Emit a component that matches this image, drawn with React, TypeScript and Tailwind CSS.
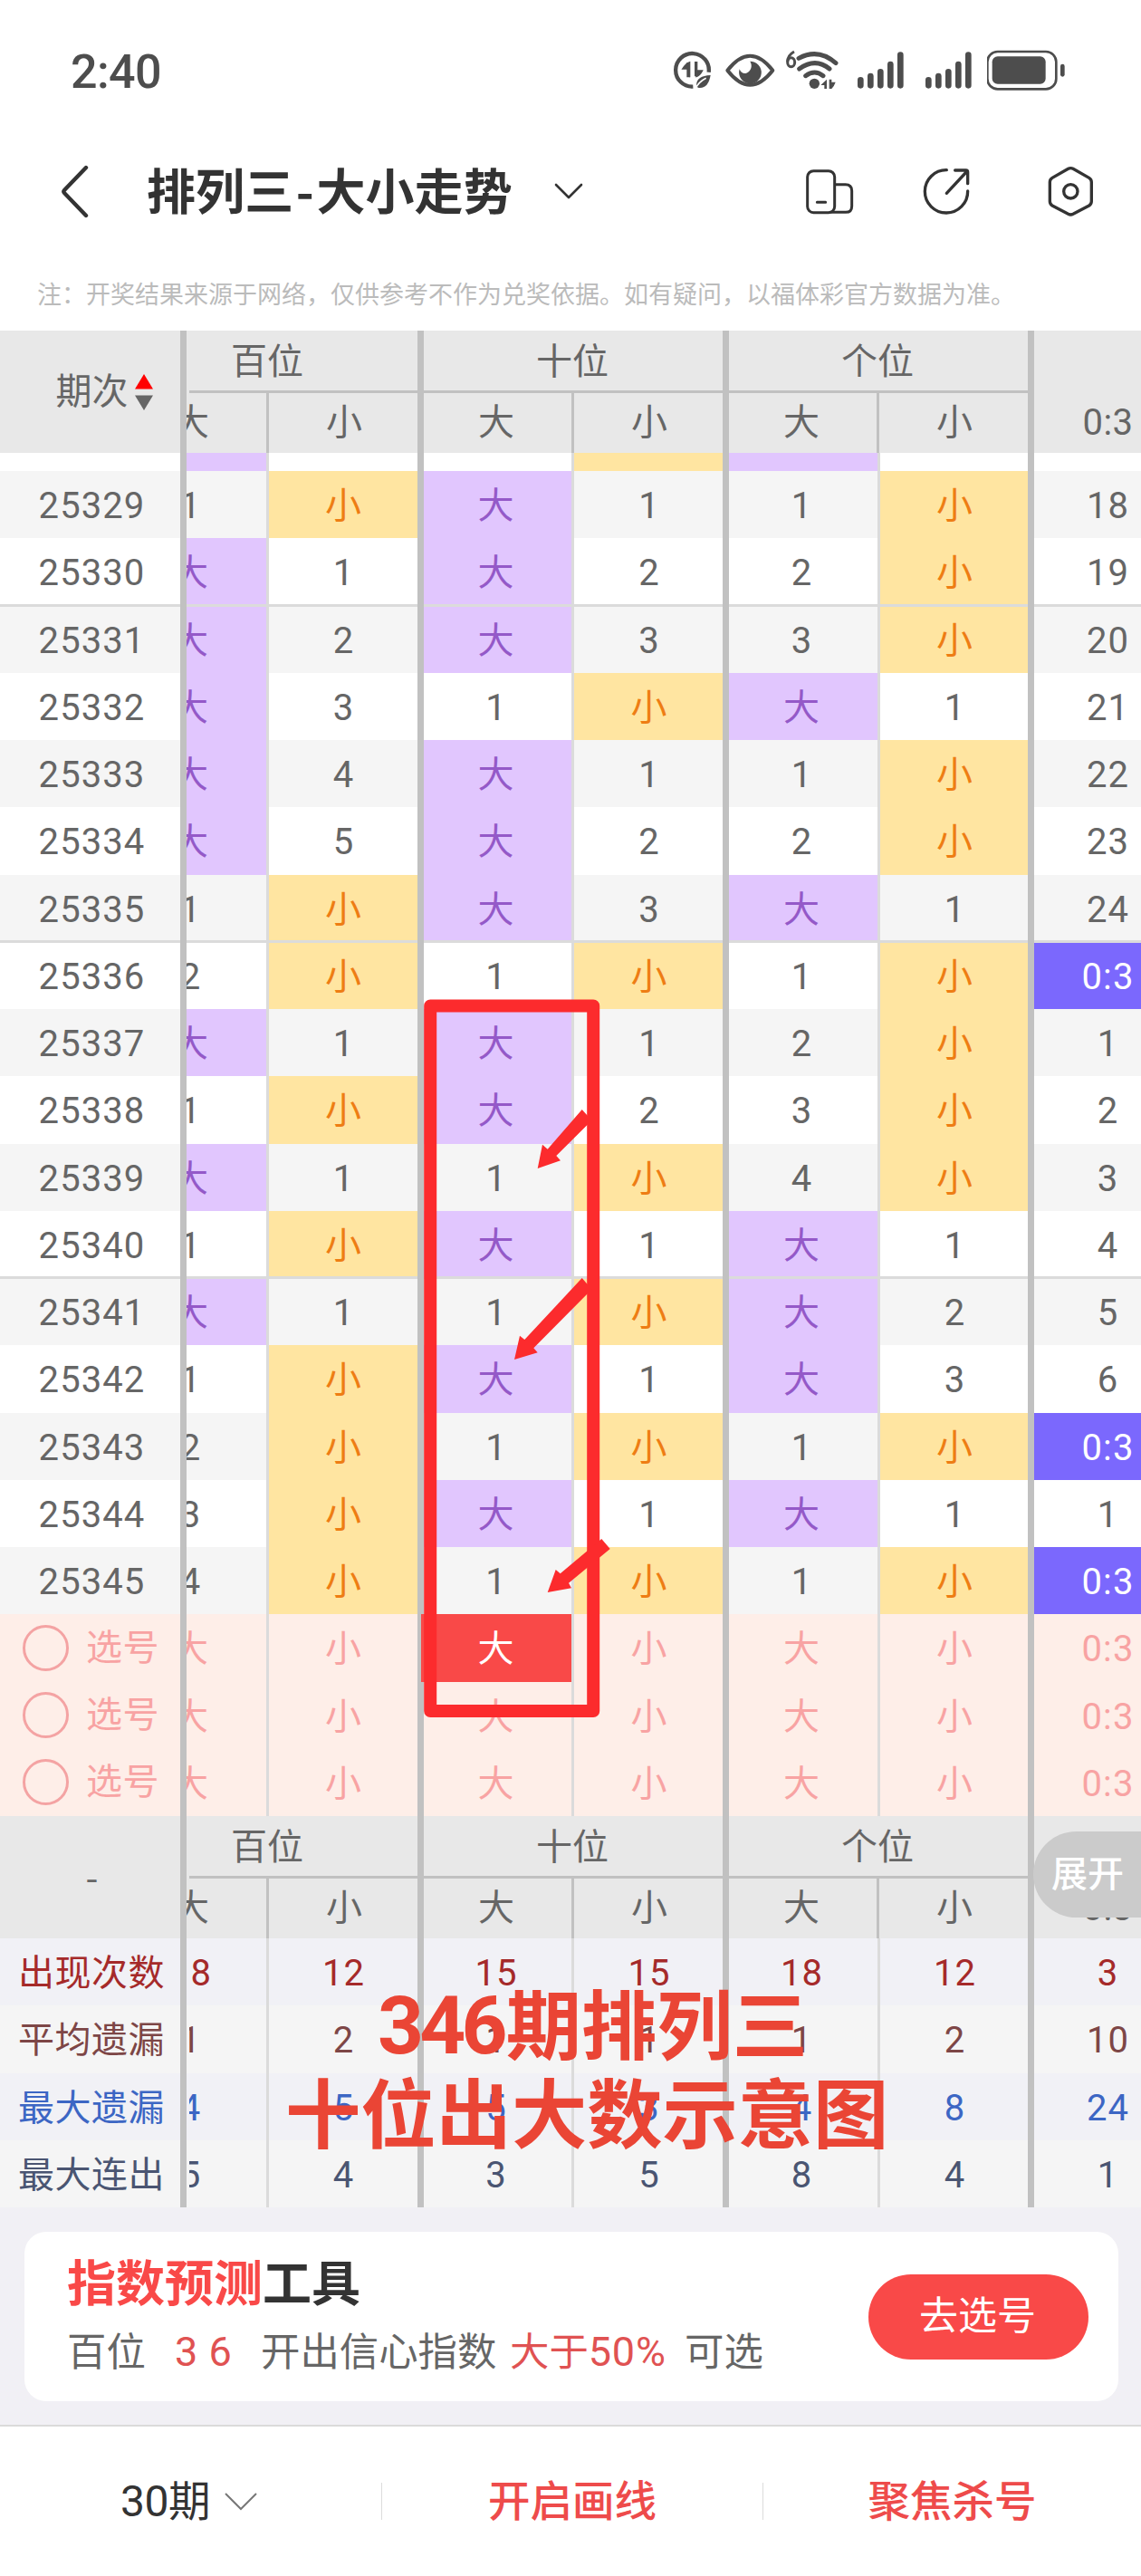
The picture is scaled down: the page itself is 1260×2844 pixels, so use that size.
import React from "react";
import clsx from "clsx";

// ─── DATA ───
// 百大, 百小, 十大, 十小, 个大, 个小, 0:3
const draws: [string, string[]][] = [
  ["25329", ["1", "小", "大", "1", "1", "小", "18"]],
  ["25330", ["大", "1", "大", "2", "2", "小", "19"]],
  ["25331", ["大", "2", "大", "3", "3", "小", "20"]],
  ["25332", ["大", "3", "1", "小", "大", "1", "21"]],
  ["25333", ["大", "4", "大", "1", "1", "小", "22"]],
  ["25334", ["大", "5", "大", "2", "2", "小", "23"]],
  ["25335", ["1", "小", "大", "3", "大", "1", "24"]],
  ["25336", ["2", "小", "1", "小", "1", "小", "0:3"]],
  ["25337", ["大", "1", "大", "1", "2", "小", "1"]],
  ["25338", ["1", "小", "大", "2", "3", "小", "2"]],
  ["25339", ["大", "1", "1", "小", "4", "小", "3"]],
  ["25340", ["1", "小", "大", "1", "大", "1", "4"]],
  ["25341", ["大", "1", "1", "小", "大", "2", "5"]],
  ["25342", ["1", "小", "大", "1", "大", "3", "6"]],
  ["25343", ["2", "小", "1", "小", "1", "小", "0:3"]],
  ["25344", ["3", "小", "大", "1", "大", "1", "1"]],
  ["25345", ["4", "小", "1", "小", "1", "小", "0:3"]],
];

const stats = [
  { label: "出现次数", color: "text-[#a52a2a]", bg: "bg-[#f1f1f6]", values: ["18", "12", "15", "15", "18", "12", "3"] },
  { label: "平均遗漏", color: "text-[#7d4646]", bg: "bg-[#f5f5f5]", values: ["1", "2", "1", "1", "1", "2", "10"] },
  { label: "最大遗漏", color: "text-[#3c66c4]", bg: "bg-[#f1f1f6]", values: ["4", "5", "5", "3", "4", "8", "24"] },
  { label: "最大连出", color: "text-[#4a5572]", bg: "bg-[#f5f5f5]", values: ["5", "4", "3", "5", "8", "4", "1"] },
];

const picks = ["大", "小", "大", "小", "大", "小", "0:3"];

// column boxes: width plus the divider on the right
const cols = [
  "w-[91px] border-r-[3px] border-[#dbdbdb]",
  "w-[171px] border-r-[7px] border-[#c1c1c1] pl-px",
  "w-[166px] border-r-[3px] border-[#dbdbdb] pr-[3px]",
  "w-[171px] border-r-[7px] border-[#c1c1c1] pl-[2px]",
  "w-[167px] border-r-[3px] border-[#dbdbdb] pr-[3px]",
  "w-[170px] border-r-[7px] border-[#c1c1c1] pl-[2px]",
  "w-[118px]",
];

const tone = (v: string) => {
  if (v === "大") return "bg-[#e1c6fe] text-[#9459c8]";
  if (v === "小") return "bg-[#ffe5a1] text-[#ee7d14]";
  if (v === "0:3") return "bg-[#7b68fd] text-white";
  return "";
};

type CellProps = {
  col: number;
  value: string;
  className?: string;
  line?: boolean;
  inset?: boolean;
};

const Cell: React.FC<CellProps> = ({ col, value, className, line, inset }) => (
  <div className={clsx("relative shrink-0 h-full flex justify-center", cols[col], className)}>
    {col === 0 ? (
      <span className={clsx("flex-1 flex justify-end overflow-hidden", inset && "ml-[3px]")}>
        <span className="w-[167px] shrink-0 text-center">{value}</span>
      </span>
    ) : col === 6 ? (
      <span className="flex-1 flex overflow-hidden">
        <span className="w-[163px] shrink-0 text-center">{value}</span>
      </span>
    ) : (
      <span>{value}</span>
    )}
    {line && <i className="absolute z-10 inset-x-0 bottom-[-1px] h-[3px] bg-[#dbdbdb]" />}
  </div>
);

const rowText = "text-[40px] leading-[77px] tracking-[1.1px]";

const Group: React.FC<{ title: string; first?: boolean }> = ({ title, first }) => (
  <div
    className={clsx(
      "shrink-0 h-full border-r-[7px] border-[#c1c1c1] overflow-hidden",
      first ? "w-[262px] pl-[3px]" : "w-[337px]"
    )}
  >
    <div className="h-[66px] flex justify-end border-[#c1c1c1] leading-[69px]">
      <span className="w-[332px] shrink-0 text-center">{title}</span>
    </div>
    <div className="h-[3px] bg-[#c1c1c1]" />
    <div className="h-[66px] flex justify-end leading-[66px]">
      <span className="w-[166px] shrink-0 border-r-[3px] border-[#c1c1c1] text-center pr-[3px]">大</span>
      <span className="w-[164px] shrink-0 text-center pl-[2px]">小</span>
    </div>
  </div>
);

const TableHead: React.FC<{ children: React.ReactNode }> = ({ children }) => (
  <div className="flex h-[135px] bg-[#e8e8e8] text-[#666] text-[40px]">
    <div className="w-[206px] shrink-0 border-r-[7px] border-[#c1c1c1] flex items-center justify-center">
      {children}
    </div>
    <Group title="百位" first />
    <Group title="十位" />
    <Group title="个位" />
    <div className="w-[118px] overflow-hidden pt-[69px]">
      <div className="w-[163px] text-center leading-[66px] tracking-[0.5px]">0:3</div>
    </div>
  </div>
);

// ─── STATUS BAR ICONS ───
const Signal: React.FC<{ className: string }> = ({ className }) => (
  <svg viewBox="730 70 225 150" className={className} stroke="currentColor" strokeWidth="20" strokeLinecap="round">
    <path d="M752 176v18M785 163v31M818 149v45M851 124v70M884 93v101" />
  </svg>
);

const StatusBar = () => (
  <div className="h-[146px] pt-[53px] pl-[78px] flex text-[#4d4d4d]">
    <div className="w-[662px] text-[52px] leading-[54px] font-medium tracking-[-0.6px]">2:40</div>
    <svg viewBox="120 70 170 150" className="w-[56.67px] h-[50px]" fill="none" stroke="currentColor">
      <path d="M248 150A55 55 0 1 0 196 198" strokeWidth="13" />
      <path d="M185 167v-50q-12 4-24 22h24M207 115v50q12-4 20-20h-20" fill="currentColor" strokeWidth="4" />
      <path d="M180 118v49M206 115v49" strokeWidth="10" />
      <path d="M254 160q-46 2-47 32l5 9q34 6 42-41z" fill="currentColor" stroke="none" />
      <path d="M203 206q12-24 36-36" stroke="white" strokeWidth="5" />
    </svg>
    <svg viewBox="290 70 200 150" className="w-[66.67px] h-[50px]" fill="none" stroke="currentColor">
      <path d="M309 144q75-96 150 0q-75 96-150 0z" strokeWidth="12" strokeLinejoin="round" />
      <path d="M384 114a37 37 0 1 1-35 26c4 14 20 19 30 9 12-11 11-24 5-35z" fill="currentColor" stroke="none" />
    </svg>
    <svg viewBox="490 70 240 150" className="w-[80px] h-[50px]" fill="none" stroke="currentColor">
      <path d="M532 82q-22 12-22 34" strokeWidth="9" />
      <ellipse cx="522" cy="117" rx="12" ry="15" strokeWidth="9" />
      <path d="M547 104Q612 69 670 120M549 139Q602 101 649 139M570 162Q600 140 628 162" strokeWidth="15" strokeLinecap="round" />
      <circle cx="599" cy="188" r="17" fill="currentColor" stroke="none" />
      <path d="M620 193l20-19v31h-8v-12zM648 174h8v9h13q-4 12-13 22h-8z" fill="currentColor" stroke="none" />
    </svg>
    <Signal className="w-[75px] h-[50px]" />
    <Signal className="w-[75px] h-[50px]" />
    <svg viewBox="1170 70 280 150" className="w-[93.33px] h-[50px] -ml-[3.33px]" fill="none" stroke="currentColor">
      <rect x="1171" y="82" width="228" height="124" rx="34" strokeWidth="8" />
      <rect x="1187" y="98" width="177" height="91" rx="18" fill="currentColor" stroke="none" />
      <path d="M1420 130v28" strokeWidth="14" strokeLinecap="round" />
    </svg>
  </div>
);

const NavBar = () => (
  <div className="h-[130px] flex items-center text-[#333]">
    <svg viewBox="0 0 40 60" className="w-[40px] h-[60px] ml-[63px]" fill="none" stroke="currentColor" strokeWidth="4.4" strokeLinecap="round" strokeLinejoin="round">
      <path d="M32 4L8 29q-1.500 1.500 0 3l24 25" />
    </svg>
    <h1 className="ml-[59px] w-[407px] text-[54px] leading-[60px] font-bold whitespace-nowrap tracking-[0.1px]">
      排列三<span className="font-['Noto_Sans_CJK_SC'] mx-[2.500px]">-</span>大小走势
    </h1>
    <svg viewBox="0 0 36 22" className="w-[36px] h-[22px] ml-[41px]" fill="none" stroke="currentColor" strokeWidth="2.600" strokeLinecap="round" strokeLinejoin="round">
      <path d="M4 4l14 14L32 4" />
    </svg>
    <div className="flex ml-[234px] mt-[3px]">
      <svg viewBox="540 450 240 200" className="w-[80px] h-[66.67px]" fill="none" stroke="currentColor" strokeWidth="9">
        <rect x="575" y="479" width="90" height="138" rx="20" />
        <path d="M667 524h34q21 0 21 21v51q0 20-20 20H650M607 583h28" strokeLinecap="round" />
      </svg>
      <svg viewBox="780 450 500 200" className="w-[166.67px] h-[66.67px]" fill="none" stroke="currentColor" strokeWidth="10" strokeLinecap="round" strokeLinejoin="round">
        <path d="M1036 476a71 71 0 1 0 70 70M1036 553l68-73M1064 477h36q6 0 6 6v38" />
      </svg>
      <svg viewBox="1280 450 300 200" className="w-[100px] h-[66.67px]" fill="none" stroke="currentColor" strokeWidth="10">
        <path d="M1438 472q8-4 16 0l53 30q8 5 8 14v64q0 9-8 14l-53 28q-8 4-16 0l-53-28q-8-5-8-14v-64q0-9 8-14z" />
        <circle cx="1446" cy="547" r="23" />
      </svg>
    </div>
  </div>
);

// ─── HAND-DRAWN MARKS OVER THE TABLE ───
const Marks = () => (
  <svg viewBox="460 1095 230 810" className="absolute z-20 left-[460px] top-[730px] w-[230px] h-[810px]" fill="#fc2b2d">
    <rect x="475.200" y="1110.500" width="180" height="778.500" fill="none" stroke="#fc2b2d" strokeWidth="14" strokeLinejoin="round" />
    <path d="M642.700 1225L653.500 1237 614.300 1276 619 1281.300 593.700 1290 599 1263.700 604.700 1268.700z" />
    <path d="M642.700 1411L653.500 1423.500 589.300 1488.300 593.700 1493.300 568 1501 574 1474.700 579.300 1479z" />
    <path d="M664.300 1699L673.700 1710 628 1747.700 631 1753.300 604.700 1758 613.700 1733 618.700 1737.300z" />
  </svg>
);

const TrendTable = () => (
  <div className="relative h-[2072px] overflow-hidden">
    <TableHead>
      <span className="ml-[31px]">期次</span>
      <svg viewBox="0 0 20 40" className="w-[20px] h-[40px] ml-[7px]">
        <path d="M10 0l10 16.500H0z" fill="#f00" />
        <path d="M10 40l10-16.500H0z" fill="#666" />
      </svg>
    </TableHead>

    {/* tail of the row scrolled under the header */}
    <div className="flex h-[20px] bg-white">
      <div className="w-[206px] shrink-0 border-r-[7px] border-[#c1c1c1]" />
      {["大", "", "", "小", "大", "", ""].map((v, i) => (
        <Cell key={i} col={i} value="" className={tone(v)} />
      ))}
    </div>

    {draws.map(([issue, values], r) => {
      const line = r % 5 === 1 && r < 16;
      return (
        <div key={issue} className={clsx("flex h-[74.25px] text-[#666]", rowText, r % 2 ? "bg-white" : "bg-[#f5f5f5]")}>
          <div className="relative w-[206px] shrink-0 border-r-[7px] border-[#c1c1c1] text-center pl-[4px]">
            {issue}
            {line && <i className="absolute z-10 inset-x-0 bottom-[-1px] h-[3px] bg-[#dbdbdb]" />}
          </div>
          {values.map((v, i) => (
            <Cell key={i} col={i} value={v} className={tone(v)} line={line} />
          ))}
        </div>
      );
    })}

    {[0, 1, 2].map((r) => (
      <div key={r} className={clsx("flex h-[74.25px] bg-[#feeee8] text-[#f8a3a3]", rowText)}>
        <div className="w-[206px] shrink-0 border-r-[7px] border-[#c1c1c1] flex items-center pl-[25px]">
          <span className="size-[51px] rounded-full border-[3px] border-[#f4a3a3]" />
          <span className="ml-[19px] tracking-[0.5px]">选号</span>
        </div>
        {picks.map((v, i) => (
          <Cell
            key={i}
            col={i}
            value={v}
            className={r === 0 && i === 2 ? "bg-[#f94948] text-white shadow-[-3px_0_0_#f94948]" : ""}
          />
        ))}
      </div>
    ))}

    <TableHead>
      <span className="ml-[4px] font-['Noto_Sans_CJK_SC'] -mt-[4px]">-</span>
    </TableHead>

    {stats.map((s) => (
      <div key={s.label} className={clsx("flex h-[74.25px]", rowText, s.bg, s.color)}>
        <div className="w-[206px] shrink-0 border-r-[7px] border-[#c1c1c1] pl-[20px] tracking-[0.5px] whitespace-nowrap">
          {s.label}
        </div>
        {s.values.map((v, i) => (
          <Cell key={i} col={i} value={v} inset />
        ))}
      </div>
    ))}

    <Marks />

    {/* caption */}
    <div className="absolute z-20 left-[315px] top-[1823px] w-[668px] text-[83.300px] leading-[98px] font-bold text-[#ea4535] whitespace-nowrap">
      <p className="pl-[102px]">
        <span className="text-[89px] tracking-[-4.8px] mr-[3px]">346</span>期排列三
      </p>
      <p>十位出大数示意图</p>
    </div>

    {/* expand handle */}
    <div className="absolute z-20 right-0 top-[1657px] w-[119px] h-[95px] rounded-l-full bg-[#cbcbcb] pl-[20px] text-white text-[40px] leading-[95px] font-medium">
      展开
    </div>
  </div>
);

const PredictCard = () => (
  <div className="h-[240px] bg-[#f1f0f5] pt-[27px] px-[27px]">
    <div className="h-[187px] mr-[-2px] rounded-[24px] bg-white flex items-center pl-[47px] pr-[33px]">
      <div className="flex-1 pt-[6px]">
        <h2 className="text-[54px] leading-[74px] font-bold text-[#333]">
          <span className="text-[#f94948]">指数预测</span>工具
        </h2>
        <p className="flex items-baseline text-[43.400px] leading-[74px] text-[#666] whitespace-nowrap">
          <span className="w-[119px]">百位</span>
          <span className="w-[95px] text-[45px] text-[#e05252] [word-spacing:1px]">3 6</span>
          <span className="w-[275px]">开出信心指数</span>
          <span className="w-[193px] text-[#e05252]">
            大于<span className="text-[45px] tracking-[0.8px]">50%</span>
          </span>
          <span>可选</span>
        </p>
      </div>
      <button className="w-[243px] h-[94px] rounded-full bg-[#f94948] text-white text-[43px] leading-[93px] pr-[2px]">
        去选号
      </button>
    </div>
  </div>
);

const BottomBar = () => (
  <div className="h-[167px] border-t-[2px] border-[#dadada] bg-white flex items-center text-[46.500px] leading-[60px]">
    <div className="w-[421px] pl-[133px] flex items-center text-[#333]">
      <span>
        <span className="text-[48px] tracking-[-0.5px]">30</span>期
      </span>
      <svg viewBox="0 0 38 22" className="w-[38px] h-[22px] ml-[15px]" fill="none" stroke="#777" strokeWidth="2">
        <path d="M2 2l17 17L36 2" />
      </svg>
    </div>
    <div className="w-px h-[41px] bg-[#dcdcdc]" />
    <div className="w-[420px] text-center font-medium text-[#ee4b4b]">开启画线</div>
    <div className="w-px h-[41px] bg-[#dcdcdc]" />
    <div className="flex-1 text-center font-medium text-[#ee4b4b]">聚焦杀号</div>
  </div>
);

const App: React.FC = () => {
  return (
    <div
      lang="zh-CN"
      className="w-[1260px] h-[2844px] overflow-hidden bg-white font-[Roboto,'Noto_Sans_CJK_SC',sans-serif]"
    >
      <StatusBar />
      <NavBar />
      <div className="h-[89px] pl-[41px] pt-[30px] text-[27px] leading-[40px] text-[#bbb] whitespace-nowrap">
        注：开奖结果来源于网络，仅供参考不作为兑奖依据。如有疑问，以福体彩官方数据为准。
      </div>
      <TrendTable />
      <PredictCard />
      <BottomBar />
    </div>
  );
};

export default App;
